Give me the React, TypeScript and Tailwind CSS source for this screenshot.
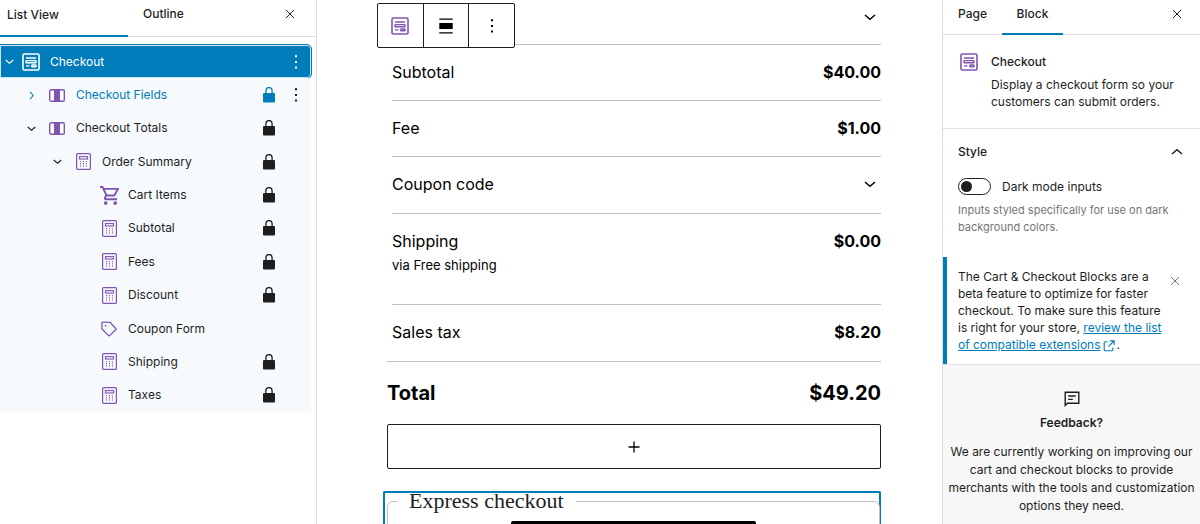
import type { ReactNode } from "react";

type IconProps = { className?: string };

function CheckoutIcon({ className = "" }: IconProps) {
    return (
        <svg viewBox="0 0 18 18" className={`h-[18px] w-[18px] ${className}`} fill="none" stroke="currentColor" aria-hidden="true">
            <rect x="1" y="1" width="16" height="16" rx="1.2" strokeWidth="1.6" />
            <path d="M4 5h10M4 12.9h3.4" strokeWidth="1.3" />
            <rect x="4" y="7.6" width="10" height="2.2" rx="0.4" strokeWidth="1.4" />
            <rect x="9.8" y="12" width="4.2" height="1.8" rx="0.4" strokeWidth="1.4" />
        </svg>
    );
}

function ColumnsIcon({ className = "" }: IconProps) {
    return (
        <svg viewBox="0 0 16 13" className={`h-[13px] w-4 ${className}`} aria-hidden="true">
            <rect x="0.7" y="0.7" width="14.6" height="11.6" rx="1.6" fill="#fff" stroke="currentColor" strokeWidth="1.4" />
            <path d="M5 .5h6v12H5z" fill="currentColor" />
        </svg>
    );
}

function TotalsIcon({ className = "" }: IconProps) {
    return (
        <svg viewBox="0 0 15 17" className={`h-[17px] w-[15px] ${className}`} fill="none" stroke="currentColor" aria-hidden="true">
            <rect x="0.6" y="0.6" width="13.8" height="15.8" rx="1" strokeWidth="1.2" />
            <rect x="3.5" y="3.6" width="8" height="2.4" strokeWidth="1.1" />
            <path d="M4.6 8v5.8M7.5 8v5.8M10.4 8v5.8" strokeWidth="1" strokeDasharray="1.2 1" />
        </svg>
    );
}

function CartIcon({ className = "" }: IconProps) {
    return (
        <svg viewBox="1 2 20 20" className={`h-[19px] w-[19px] ${className}`} fill="currentColor" aria-hidden="true">
            <path d="M15.55 13c.75 0 1.41-.41 1.75-1.03l3.58-6.49A.996.996 0 0 0 20.01 4H5.21l-.94-2H1v2h2l3.6 7.59-1.35 2.44C4.52 15.37 5.48 17 7 17h12v-2H7l1.1-2h7.45zM6.16 6h12.15l-2.76 5H8.53L6.16 6zM7 18c-1.1 0-1.99.9-1.99 2S5.9 22 7 22s2-.9 2-2-.9-2-2-2zm10 0c-1.1 0-1.99.9-1.99 2s.89 2 1.99 2 2-.9 2-2-.9-2-2-2z" />
        </svg>
    );
}

function TagIcon({ className = "" }: IconProps) {
    return (
        <svg viewBox="0 0 16 16" className={`h-4 w-4 ${className}`} fill="none" stroke="currentColor" strokeWidth="1.3" strokeLinejoin="round" aria-hidden="true">
            <path d="M.9 1.8 1 8l6.3 6.4q.8.8 1.6 0l5.7-5.6q.8-.8 0-1.6L9 1.3 1.6 1.1q-.7 0-.7.7z" />
            <circle cx="4.6" cy="4.8" r="0.9" fill="currentColor" stroke="none" />
        </svg>
    );
}

function LockIcon() {
    return (
        <svg viewBox="0 0 12 16" className="h-4 w-3" aria-hidden="true">
            <path d="M2.9 8V3.6a3.1 3.1 0 0 1 6.2 0V8" fill="none" stroke="currentColor" strokeWidth="1.3" />
            <rect y="6" width="12" height="9.5" rx="1" fill="currentColor" />
        </svg>
    );
}

function Chevron({ className = "" }: IconProps) {
    return (
        <svg viewBox="0 0 12 12" className={className} fill="none" stroke="currentColor" strokeWidth="1.5" aria-hidden="true">
            <path d="M1 4q5 4.2 5 4.2T11 4" />
        </svg>
    );
}

function DotsIcon() {
    return (
        <svg viewBox="0 0 4 16" className="h-4 w-1" fill="currentColor" aria-hidden="true">
            <path d="M1 1.2h2v2H1zM1 6.9h2v2H1zM1 12.6h2v2H1z" />
        </svg>
    );
}

function CloseIcon({ className = "" }: IconProps) {
    return (
        <svg viewBox="0 0 10 10" className={`h-[10px] w-[10px] ${className}`} fill="none" stroke="currentColor" aria-hidden="true">
            <path d="m1 1 8 8M9 1 1 9" />
        </svg>
    );
}

type Block = {
    name: string;
    icon: (props: IconProps) => ReactNode;
    indent: string;
    expander?: "open" | "closed";
    locked?: boolean;
    state?: "selected" | "hovered";
};

const blocks: Block[] = [
    { name: "Checkout", icon: CheckoutIcon, indent: "pl-0", expander: "open", state: "selected" },
    { name: "Checkout Fields", icon: ColumnsIcon, indent: "pl-[18px]", expander: "closed", locked: true, state: "hovered" },
    { name: "Checkout Totals", icon: ColumnsIcon, indent: "pl-[18px]", expander: "open", locked: true },
    { name: "Order Summary", icon: TotalsIcon, indent: "pl-[44px]", expander: "open", locked: true },
    { name: "Cart Items", icon: CartIcon, indent: "pl-[70px]", locked: true },
    { name: "Subtotal", icon: TotalsIcon, indent: "pl-[70px]", locked: true },
    { name: "Fees", icon: TotalsIcon, indent: "pl-[70px]", locked: true },
    { name: "Discount", icon: TotalsIcon, indent: "pl-[70px]", locked: true },
    { name: "Coupon Form", icon: TagIcon, indent: "pl-[70px]" },
    { name: "Shipping", icon: TotalsIcon, indent: "pl-[70px]", locked: true },
    { name: "Taxes", icon: TotalsIcon, indent: "pl-[70px]", locked: true },
];

function BlockRow({ block }: { block: Block }) {
    const selected = block.state === "selected";
    const hovered = block.state === "hovered";
    const Icon = block.icon;

    return (
        <li
            className={`flex items-center pr-[2px] ${block.indent} ${
                selected
                    ? "rounded-r-sm bg-[#007cba] text-white outline-1 outline-[#007cba] ring-1 ring-inset ring-white/80"
                    : "bg-[#f6fafd]"
            } ${hovered ? "text-[#007cba]" : ""}`}
        >
            <span className={`flex justify-center ${selected ? "w-[18px]" : "w-[26px]"}`}>
                {block.expander && (
                    <button type="button" aria-label={`Toggle ${block.name}`}>
                        <Chevron className={`h-[9px] w-[9px] ${block.expander === "closed" ? "-rotate-90" : ""}`} />
                    </button>
                )}
            </span>
            <span className="flex w-[26px] justify-center">
                <Icon className={selected ? "text-white" : "text-[#7f54b3]"} />
            </span>
            <button type="button" className="ml-[6px] flex-1 text-left">
                {block.name}
            </button>
            <span className="flex w-[26px] justify-center">{block.locked && <LockIcon />}</span>
            <span className="flex w-[27px] justify-center">
                {block.state && (
                    <button type="button" aria-label={`Options for ${block.name}`} className={selected ? "" : "text-[#1e1e1e]"}>
                        <DotsIcon />
                    </button>
                )}
            </span>
        </li>
    );
}

function ListView() {
    return (
        <aside className="w-[317px] shrink-0 border-r border-[#dddddd]">
            <div className="flex h-[37px] border-b border-[#dddddd] font-medium">
                <button type="button" className="-mb-px w-32 border-b-2 border-[#007cba] pb-[6px] pl-[7px] text-left">
                    List View
                </button>
                <button type="button" className="pb-2 pl-[15px] text-left">
                    Outline
                </button>
                <button type="button" aria-label="Close list view" className="mr-[21px] mb-2 ml-auto">
                    <CloseIcon />
                </button>
            </div>
            <ul className="mt-2 mr-[5px] grid h-[367px] auto-rows-fr">
                {blocks.map((block) => (
                    <BlockRow key={block.name} block={block} />
                ))}
            </ul>
        </aside>
    );
}

function TotalRow({ label, value, note, className }: { label: string; value?: string; note?: string; className: string }) {
    return (
        <div className={`ml-[5px] flex justify-between pt-[15px] ${className}`}>
            <div>
                <p>{label}</p>
                {note && <p className="text-[13px] leading-6">{note}</p>}
            </div>
            {value ? (
                <p className="font-bold">{value}</p>
            ) : (
                <button type="button" aria-label={`Expand ${label}`} className="mr-[5px] h-6">
                    <Chevron className="h-3 w-3" />
                </button>
            )}
        </div>
    );
}

function BlockToolbar() {
    return (
        <div role="toolbar" aria-label="Block tools" className="absolute top-[3px] left-[60px] flex h-[45px] w-[138px] divide-x divide-[#1e1e1e] rounded-xs border border-[#1e1e1e] bg-white">
            <button type="button" aria-label="Checkout" className="flex flex-1 items-center justify-center text-[#7f54b3]">
                <CheckoutIcon />
            </button>
            <button type="button" aria-label="Align" className="flex flex-1 items-center justify-center">
                <svg viewBox="0 0 14 16" className="h-4 w-[14px]" fill="currentColor" aria-hidden="true">
                    <path d="M.3.5h13.4v1.3H.3zM.3 5h13.4v6H.3zM.3 14.2h13.4v1.3H.3z" />
                </svg>
            </button>
            <button type="button" aria-label="Options" className="flex flex-1 items-center justify-center">
                <DotsIcon />
            </button>
        </div>
    );
}

function Canvas() {
    return (
        <main className="relative min-w-0 flex-1 pr-[61px] pl-[70px] text-base leading-6 text-black">
            <div className="ml-[5px] flex h-[45px] justify-end border-b border-[#bfbfbf] pt-[5px] pr-[5px]">
                <button type="button" aria-label="Expand order items" className="h-6">
                    <Chevron className="h-3 w-3" />
                </button>
            </div>
            <TotalRow label="Subtotal" value="$40.00" className="h-14 border-b border-[#bfbfbf]" />
            <TotalRow label="Fee" value="$1.00" className="h-14 border-b border-[#bfbfbf]" />
            <TotalRow label="Coupon code" className="h-[57px] border-b border-[#bfbfbf]" />
            <TotalRow label="Shipping" value="$0.00" note="via Free shipping" className="h-[91px] border-b border-[#bfbfbf]" />
            <TotalRow label="Sales tax" value="$8.20" className="h-14" />
            <div className="flex justify-between border-t border-[#bfbfbf] pt-[15px] text-xl leading-8 font-bold">
                <p>Total</p>
                <p>$49.20</p>
            </div>
            <button type="button" aria-label="Add block" className="mt-[15px] flex h-[45px] w-full items-center justify-center rounded-xs border border-[#1e1e1e]">
                <svg viewBox="0 0 12 12" className="h-3 w-3" stroke="currentColor" strokeWidth="1.3" aria-hidden="true">
                    <path d="M6 .5v11M.5 6h11" />
                </svg>
            </button>
            <section className="mt-[22px] -ml-1 rounded-t-xs border-2 border-b-0 border-[#007cba] pl-[2px]">
                <fieldset className="-mr-px h-40 rounded-md border border-[#bfbfbf]">
                    <legend className="ml-[9px] px-3 font-['Liberation_Serif',serif] text-[22px] leading-4 text-[#1e1e1e]">
                        Express checkout
                    </legend>
                    <button type="button" aria-label="Pay now" className="mx-auto mt-3 block h-10 w-1/2 rounded-xs bg-black" />
                </fieldset>
            </section>
            <BlockToolbar />
        </main>
    );
}

function Settings() {
    return (
        <aside className="flex w-[258px] shrink-0 flex-col border-l border-[#dddddd]">
            <div className="flex h-[35px] border-b border-[#dddddd] font-medium">
                <button type="button" className="px-[15px] pb-[7px]">
                    Page
                </button>
                <button type="button" className="-mb-px w-[61px] border-b-2 border-[#007cba] pb-[6px]">
                    Block
                </button>
                <button type="button" aria-label="Close settings" className="mr-[18px] mb-[7px] ml-auto">
                    <CloseIcon />
                </button>
            </div>

            <section className="flex h-[94px] gap-[13px] border-b border-[#e0e0e0] pt-[18px] pl-[17px] leading-[17px]">
                <CheckoutIcon className="shrink-0 text-[#7f54b3]" />
                <div>
                    <h2 className="mb-[6px] font-medium">Checkout</h2>
                    <p>
                        Display a checkout form so your
                        <br />
                        customers can submit orders.
                    </p>
                </div>
            </section>

            <section className="h-32 pr-[17px] pl-[15px]">
                <button type="button" className="flex w-full items-center justify-between pt-[13px] leading-5 font-medium">
                    Style
                    <Chevron className="h-3 w-3 rotate-180" />
                </button>
                <label className="mt-4 flex items-center gap-[11px]">
                    <input
                        type="checkbox"
                        className="h-[17px] w-[33px] appearance-none rounded-full border border-[#1e1e1e] p-[2px] before:block before:h-[11px] before:w-[11px] before:rounded-full before:bg-[#1e1e1e] checked:before:ml-auto"
                    />
                    Dark mode inputs
                </label>
                <p className="mt-[7px] text-[11px] leading-[17px] text-[#757575]">
                    Inputs styled specifically for use on dark
                    <br />
                    background colors.
                </p>
            </section>

            <section className="flex h-[107px] justify-between border-l-4 border-[#007cba] pt-[11px] pr-5 pl-[11px] leading-[17px]">
                <p className="whitespace-nowrap">
                    The Cart &amp; Checkout Blocks are a
                    <br />
                    beta feature to optimize for faster
                    <br />
                    checkout. To make sure this feature
                    <br />
                    is right for your store,{" "}
                    <a href="#extensions" className="text-[#007cba] underline">
                        review the list
                        <br />
                        of compatible extensions
                    </a>
                    <svg viewBox="0 0 12 12" className="mx-[2px] inline h-3 w-3 text-[#007cba]" fill="none" stroke="currentColor" strokeWidth="1.1" aria-hidden="true">
                        <path d="M4.5 1.8H2.2q-1 0-1 1v7q0 1 1 1h6.6q1 0 1-1V7.6M7 .9h4.2v4.2M11 1 5.4 6.6" />
                    </svg>
                    .
                </p>
                <button type="button" aria-label="Dismiss notice" className="mt-2 h-[10px] text-[#757575]">
                    <CloseIcon />
                </button>
            </section>

            <section className="flex-1 border-t border-[#e0e0e0] bg-[#f7f7f7] pt-[26px] text-center">
                <svg viewBox="0 0 16 16" className="mx-auto h-4 w-4" fill="none" stroke="currentColor" strokeWidth="1.4" aria-hidden="true">
                    <path d="M1.2 14.4V1.2h13.6v11H3.4zM4.2 5h7.6M4.2 8.4h4.6" />
                </svg>
                <h2 className="mt-[7px] leading-[18px] font-semibold">Feedback?</h2>
                <p className="mt-[11px] leading-[18px] whitespace-nowrap">
                    We are currently working on improving our
                    <br />
                    cart and checkout blocks to provide
                    <br />
                    merchants with the tools and customization
                    <br />
                    options they need.
                </p>
            </section>
        </aside>
    );
}

export default function App() {
    return (
        <div className="flex h-screen overflow-hidden bg-white font-[Inter,sans-serif] text-xs text-[#1e1e1e]">
            <ListView />
            <Canvas />
            <Settings />
        </div>
    );
}
